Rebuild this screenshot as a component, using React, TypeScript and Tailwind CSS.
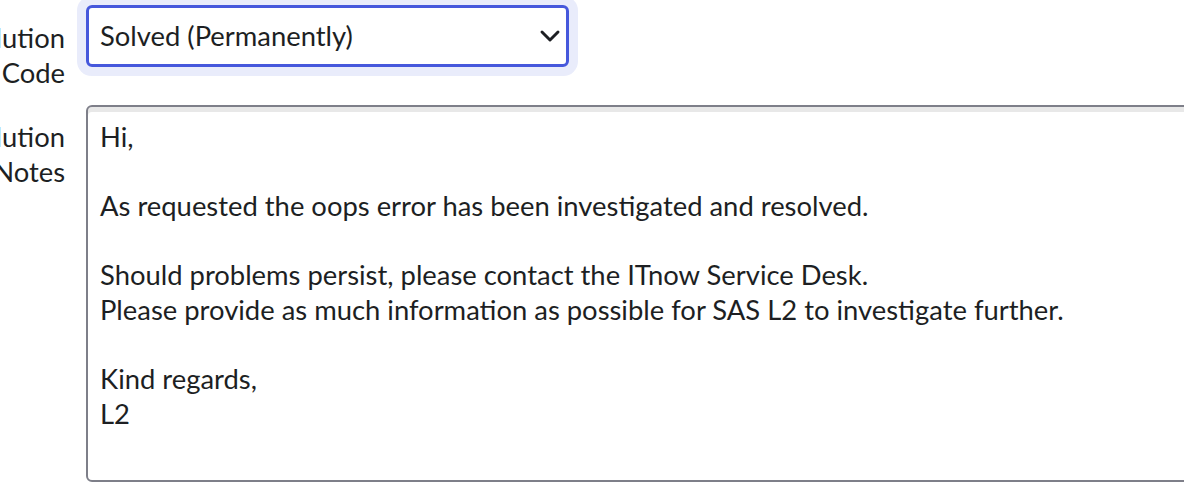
import { ChevronDown } from "lucide-react";

const notes = `Hi,

As requested the oops error has been investigated and resolved.

Should problems persist, please contact the ITnow Service Desk.
Please provide as much information as possible for SAS L2 to investigate further.

Kind regards,
L2`;

const App = () => {
  return (
    <div className="min-h-screen bg-white overflow-hidden font-['Lato',sans-serif] text-[27.4px] leading-[34.6px] text-[#1d1f23]">
      <div className="ml-[-82px] pt-[5px] flex flex-col gap-[38px]">
        <div className="flex gap-[21px] h-[62px]">
          <label className="w-[147px] shrink-0 text-right pt-[16px]">Resolution Code</label>
          <div className="relative w-[483px] h-[62px] rounded-[6px] shadow-[0_0_0_9px_#e9ecfb]">
            <select
              defaultValue="solved"
              className="appearance-none w-full h-full rounded-[6px] border-[3px] border-[#4658dc] bg-white pl-[11px] pr-10 outline-none"
            >
              <option value="solved">Solved (Permanently)</option>
            </select>
            <ChevronDown
              className="absolute right-[3px] top-[15px] h-[32px] w-[32px] pointer-events-none text-[#1d1f23]"
              strokeWidth={2.2}
            />
          </div>
        </div>

        <div className="flex gap-[21px]">
          <label className="w-[147px] shrink-0 text-right pt-[15px]">Resolution Notes</label>
          <textarea
            readOnly
            value={notes}
            className="w-[1150px] h-[377px] shrink-0 resize-none rounded-[6px] border-2 border-[#7e7f89] bg-white px-[12px] pt-[13px] shadow-[inset_0_5px_0_#e8e8e8] outline-none"
          />
        </div>
      </div>
    </div>
  );
};

export default App;
